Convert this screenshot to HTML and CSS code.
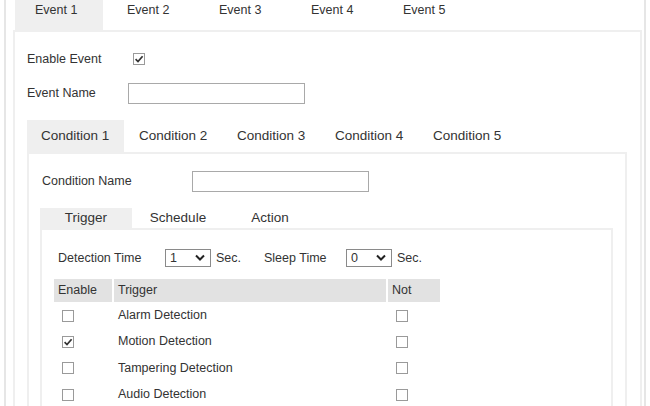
FILE: index.html
```html
<!DOCTYPE html>
<html>
<head>
<meta charset="utf-8">
<link rel="stylesheet" href="styles.css">
</head>
<body>
<div class="frame">
  <div class="tabs event-tabs">
    <div class="tab active">Event 1</div>
    <div class="tab">Event 2</div>
    <div class="tab">Event 3</div>
    <div class="tab">Event 4</div>
    <div class="tab">Event 5</div>
  </div>
  <div class="panel event-panel">
    <div class="row">
      <span class="label ev-label">Enable Event</span>
      <span class="cb checked cb-enable"><svg viewBox="0 0 12 12" width="12" height="12"><path d="M2.6 6.2 L5 8.6 L9.6 3.2" fill="none" stroke="#333" stroke-width="1.7"/></svg></span>
    </div>
    <div class="row">
      <span class="label ev-label">Event Name</span>
      <span class="input"></span>
    </div>
    <div class="tabs cond-tabs">
      <div class="tab active">Condition 1</div>
      <div class="tab">Condition 2</div>
      <div class="tab">Condition 3</div>
      <div class="tab">Condition 4</div>
      <div class="tab">Condition 5</div>
    </div>
    <div class="panel cond-panel">
      <div class="row cond-row">
        <span class="label cond-label">Condition Name</span>
        <span class="input"></span>
      </div>
      <div class="tabs trig-tabs">
        <div class="tab active">Trigger</div>
        <div class="tab">Schedule</div>
        <div class="tab">Action</div>
      </div>
      <div class="panel trig-panel">
        <div class="row time-row">
          <span class="label det-label">Detection Time</span>
          <span class="select"><span>1</span><svg viewBox="0 0 10 8" width="10" height="8"><path d="M1 1.5 L5 5.5 L9 1.5" fill="none" stroke="#222" stroke-width="2"/></svg></span>
          <span class="sec">Sec.</span>
          <span class="label sleep-label">Sleep Time</span>
          <span class="select"><span>0</span><svg viewBox="0 0 10 8" width="10" height="8"><path d="M1 1.5 L5 5.5 L9 1.5" fill="none" stroke="#222" stroke-width="2"/></svg></span>
          <span class="sec">Sec.</span>
        </div>
        <div class="grid head">
          <div class="hcell">Enable</div>
          <div class="hcell">Trigger</div>
          <div class="hcell">Not</div>
        </div>
        <div class="grid trow">
          <div class="cell"><span class="cb"></span></div>
          <div class="cell">Alarm Detection</div>
          <div class="cell"><span class="cb"></span></div>
        </div>
        <div class="grid trow">
          <div class="cell"><span class="cb checked"><svg viewBox="0 0 12 12" width="12" height="12"><path d="M2.6 6.2 L5 8.6 L9.6 3.2" fill="none" stroke="#333" stroke-width="1.7"/></svg></span></div>
          <div class="cell">Motion Detection</div>
          <div class="cell"><span class="cb"></span></div>
        </div>
        <div class="grid trow">
          <div class="cell"><span class="cb"></span></div>
          <div class="cell">Tampering Detection</div>
          <div class="cell"><span class="cb"></span></div>
        </div>
        <div class="grid trow">
          <div class="cell"><span class="cb"></span></div>
          <div class="cell">Audio Detection</div>
          <div class="cell"><span class="cb"></span></div>
        </div>
      </div>
    </div>
  </div>
</div>
</body>
</html>
```
FILE: styles.css
```css
html, body {
  margin: 0;
  padding: 0;
  background: #fff;
  overflow: hidden;
}
body {
  font-family: "Liberation Sans", Arial, sans-serif;
  font-size: 12.5px;
  color: #333;
  height: 406px;
}
.frame {
  box-sizing: border-box;
  margin-left: 4px;
  width: 642px;
  height: 406px;
  border-left: 2px solid #e6e6e6;
  border-right: 2px solid #e6e6e6;
  padding: 0 2px 0 7px;
}
.tabs {
  display: flex;
}
.tab {
  box-sizing: border-box;
  white-space: nowrap;
}
.tab.active {
  background: #efefef;
}
.event-tabs {
  height: 30px;
  padding-left: 2px;
}
.event-tabs .tab {
  width: 88px;
  margin-right: 4px;
  padding: 3px 0 0 20px;
  line-height: 15px;
}
.panel {
  border: 2px solid #efefef;
  border-bottom-width: 0;
  box-sizing: border-box;
}
.event-panel {
  padding: 10px 13px 0 12px;
  height: 376px;
}
.row {
  display: flex;
  align-items: center;
  height: 34px;
}
.label {
  flex: none;
}
.ev-label {
  width: 101px;
}
.input {
  box-sizing: border-box;
  width: 177px;
  height: 21px;
  border: 1px solid #a9a9a9;
  background: #fff;
}
.cb {
  box-sizing: border-box;
  display: inline-flex;
  width: 12px;
  height: 12px;
  border: 1px solid #9a9a9a;
  background: #fff;
  position: relative;
}
.cb svg {
  position: absolute;
  left: -1px;
  top: -1px;
}
.cb-enable {
  margin-left: 5px;
}
.cond-tabs {
  margin-top: 10px;
  height: 32px;
}
.cond-tabs .tab {
  width: 98px;
  padding-left: 14px;
  font-size: 13.5px;
  line-height: 32px;
}
.cond-tabs .tab.active {
  width: 97px;
  margin-right: 1px;
}
.cond-panel {
  padding: 16px 12px 0 11px;
  height: 254px;
}
.cond-row {
  height: 22px;
  padding-left: 2px;
}
.cond-label {
  width: 150px;
}
.trig-tabs {
  margin-top: 16px;
  height: 20px;
}
.trig-tabs .tab {
  width: 92px;
  text-align: center;
  font-size: 13.5px;
  line-height: 20px;
}
.trig-panel {
  padding: 18px 0 0 12px;
  height: 178px;
}
.time-row {
  height: 20px;
  padding-left: 4px;
}
.det-label {
  width: 107px;
}
.sleep-label {
  width: 82px;
}
.select {
  box-sizing: border-box;
  width: 46px;
  height: 18px;
  border: 1px solid #8a8a8a;
  display: flex;
  align-items: center;
  justify-content: space-between;
  padding: 0 5px 0 4px;
  color: #333;
}
.sec {
  margin-left: 5px;
  width: 48px;
}
.grid {
  display: grid;
  grid-template-columns: 58px 272px 52px;
  column-gap: 2px;
}
.head {
  margin-top: 11px;
  height: 23px;
}
.hcell {
  background: #e2e2e2;
  padding-left: 4px;
  line-height: 23px;
  color: #333;
}
.trow {
  height: 26.3px;
  align-items: center;
}
.cell {
  padding-left: 4px;
}
.cell .cb {
  margin-left: 4px;
  vertical-align: middle;
}
```
